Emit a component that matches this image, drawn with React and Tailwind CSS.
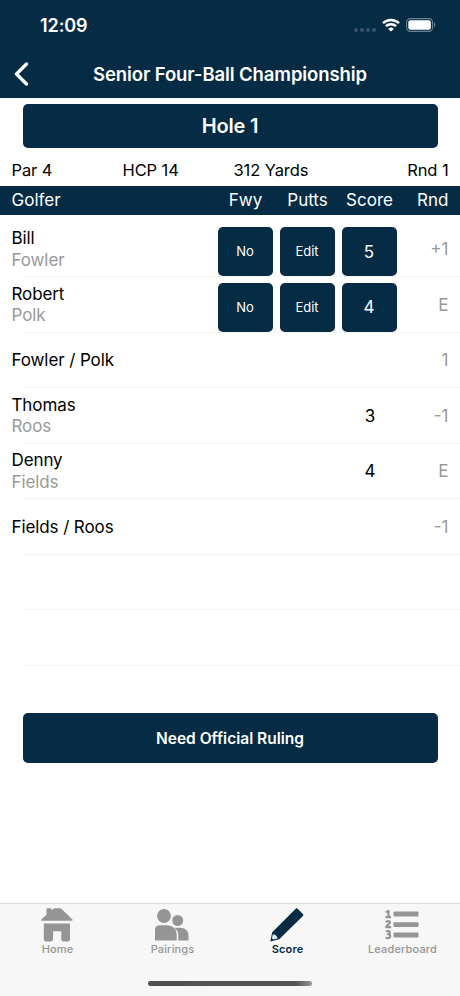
import React from 'react';

const infoItems = [
  { text: 'Par 4', className: 'w-[111px]' },
  { text: 'HCP 14', className: 'w-[111px]' },
  { text: '312 Yards', className: 'flex-1' },
  { text: 'Rnd 1', className: '' },
];

const rows = [
  { first: 'Bill', last: 'Fowler', fwy: 'No', putts: 'Edit', score: '5', rnd: '+1', editable: true },
  { first: 'Robert', last: 'Polk', fwy: 'No', putts: 'Edit', score: '4', rnd: 'E', editable: true },
  { first: 'Fowler / Polk', rnd: '1' },
  { first: 'Thomas', last: 'Roos', score: '3', rnd: '-1' },
  { first: 'Denny', last: 'Fields', score: '4', rnd: 'E' },
  { first: 'Fields / Roos', rnd: '-1' },
  {},
  {},
];

const HomeIcon = () => (
  <svg width="32" height="34" viewBox="0 0 32 34" fill="currentColor">
    <path d="M5.500 1c0-.4.300-.7.700-.7h3.600c.4 0 .7.300.7.7v1.500l1.500-1.500c.6-.5 1.300-.7 2.100-.7h4.400c.8 0 1.500.2 2.100.7l10.600 10.200c.7.700.5 1.500-.5 1.500H1c-1 0-1.200-.8-.5-1.500l5-4.500z" />
    <path d="M2.800 15.600H29v15.600c0 1.300-.9 2.200-2.200 2.200h-4.300c-1.300 0-2.200-.9-2.200-2.200v-8h-8.200v8c0 1.300-.9 2.200-2.200 2.200H5C3.700 33.400 2.800 32.500 2.800 31.200z" />
  </svg>
);

const PairingsIcon = () => (
  <svg width="34" height="32" viewBox="0 0 34 32" fill="currentColor">
    <circle cx="9" cy="7" r="6.900" />
    <circle cx="22.700" cy="11.500" r="5.500" />
    <path d="M0 20.500C0 17.500 2 16.300 5 16.300h6.500c6.500 0 10.200 4 10.200 9.700v5.500H0z" />
    <path d="M19 18.800h5.800c5.500 0 8.700 3 8.700 7.500v5.200H23.300V26c0-3-1.500-5.500-4.300-7.200z" />
  </svg>
);

const PencilIcon = () => (
  <svg width="34" height="34" viewBox="0 0 34 34">
    <path d="M25.700.8c.6-.6 1.300-.6 1.900 0l5.300 5.200c.6.600.6 1.300 0 1.900L9.200 31.200.3 33.500l1.900-9.200z" fill="#052b45" />
    <path d="M2.900 26.200c2.700.4 4.200 1.800 4.700 4.200l-4.300 1.200-1.400-1.300z" fill="#dfeaf2" />
  </svg>
);

const LeaderboardIcon = () => (
  <svg width="34" height="30" viewBox="0 0 34 30" fill="currentColor">
    <rect x="8.500" y="1.600" width="25" height="4.800" rx="1" />
    <rect x="8.500" y="12.200" width="25" height="4.800" rx="1" />
    <rect x="8.500" y="22.600" width="25" height="4.800" rx="1" />
    <g fill="none" stroke="currentColor" strokeWidth="2.200">
      <path d="M.8 2.400L3.500.7V7M.5 7.200h5.500" />
      <path d="M.9 12.200c1-1.700 4.300-1.500 4.100.4-.1 1.300-3.500 2.600-3.700 4.500h4.900" />
      <path d="M.9 21.700c1.500-1.200 4.200-.8 4 .8-.1 1.300-1.500 1.700-2.700 1.700 1.500 0 3 .4 3 2 0 2.200-3 2.500-4.500 1.200" />
    </g>
  </svg>
);

const tabs = [
  { label: 'Home', icon: <HomeIcon /> },
  { label: 'Pairings', icon: <PairingsIcon /> },
  { label: 'Score', icon: <PencilIcon />, active: true },
  { label: 'Leaderboard', icon: <LeaderboardIcon /> },
];

const StatusBar = () => (
  <div className="flex h-[50px] items-center pl-10 pr-6">
    <span className="flex-1 pt-px text-[18px] font-semibold leading-6 tracking-[-0.1px]">12:09</span>
    <div className="mt-[9px] flex gap-[2px]">
      {[0, 1, 2, 3].map((dot) => (
        <span key={dot} className="size-[4px] rounded-full bg-[#385469]" />
      ))}
    </div>
    <svg className="ml-[6px]" width="18" height="14" viewBox="0 0 18 14" fill="none" stroke="white" strokeWidth="2.500">
      <path d="M1 5.200a11.500 11.500 0 0 1 16 0" />
      <path d="M3.900 8.200a7.400 7.400 0 0 1 10.200 0" />
      <path d="M9 13.500L6.200 10.900a4 4 0 0 1 5.600 0z" fill="white" stroke="none" />
    </svg>
    <svg className="ml-[6px]" width="30" height="14" viewBox="0 0 30 14">
      <rect x="0.600" y="0.600" width="26" height="12.800" rx="3.800" fill="none" stroke="#6b8292" strokeWidth="1.100" />
      <rect x="2.300" y="2.300" width="22.600" height="9.400" rx="2.200" fill="white" />
      <path d="M28 4.800c1.700.6 1.700 3.800 0 4.400z" fill="#6b8292" />
    </svg>
  </div>
);

const CellButton = ({ children, large }) => (
  <button
    className={`h-[49px] w-[55px] rounded-[5px] bg-[#052b45] text-white ${
      large ? 'pt-px text-[17px]' : 'text-[13px]'
    }`}
  >
    {children}
  </button>
);

const GolferRow = ({ first, last, fwy, putts, score, rnd, editable }) => (
  <div className="relative flex h-[55.500px] items-center px-[11.500px]">
    <div className="absolute bottom-0 left-[23px] right-0 h-px bg-[#f4f4f4]" />
    <div className="w-[206px] pt-px text-[17px] leading-[21.500px] tracking-[-0.1px]">
      <div className="text-black">{first}</div>
      {last && <div className="text-[#999]">{last}</div>}
    </div>
    <div className="relative mt-[5px] flex w-[180px] gap-[7px]">
      {editable && (
        <>
          <CellButton>{fwy}</CellButton>
          <CellButton>{putts}</CellButton>
          <CellButton large>{score}</CellButton>
        </>
      )}
    </div>
    {!editable && score && (
      <div className="-ml-[55px] w-[55px] pt-px text-center text-[17px]">{score}</div>
    )}
    <div className="flex-1 pt-px text-right text-[17px] text-[#999]">{rnd}</div>
  </div>
);

const App = () => {
  return (
    <div className="flex h-[996px] w-[460px] flex-col overflow-hidden bg-white font-['Inter',sans-serif] text-black">
      {/* Header */}
      <header className="h-[98px] bg-[#052b45] text-white">
        <StatusBar />
        <div className="flex h-12 items-center">
          <svg className="ml-[14px]" width="15" height="24" viewBox="0 0 15 24" fill="none" stroke="white" strokeWidth="3.300" strokeLinecap="round" strokeLinejoin="round">
            <path d="M12.500 2L2.500 12l10 10" />
          </svg>
          <h1 className="flex-1 whitespace-nowrap pr-[29px] pt-px text-center text-[18.500px] font-semibold tracking-[-0.1px]">
            Senior Four-Ball Championship
          </h1>
        </div>
      </header>

      {/* Hole summary */}
      <section className="h-[88px] pt-[6px]">
        <button className="mx-[22.500px] block h-11 w-[415px] rounded-[5px] bg-[#052b45] text-[20px] font-semibold tracking-[-0.2px] text-white">
          Hole 1
        </button>
        <div className="flex h-[44px] items-center px-[11.500px] text-[16.500px] tracking-[-0.1px]">
          {infoItems.map((item) => (
            <span key={item.text} className={item.className}>{item.text}</span>
          ))}
        </div>
      </section>

      {/* Scorecard */}
      <section>
        <div className="flex h-[29px] items-center bg-[#052b45] px-[11.500px] pt-px text-[17px] text-white">
          <span className="w-[203px]">Golfer</span>
          <span className="w-[62px] text-center">Fwy</span>
          <span className="w-[62px] text-center">Putts</span>
          <span className="w-[62px] text-center">Score</span>
          <span className="flex-1 text-right">Rnd</span>
        </div>
        <div className="pt-[6.500px]">
          {rows.map((row, index) => (
            <GolferRow key={index} {...row} />
          ))}
        </div>
      </section>

      <button className="mx-[22.500px] mt-[47.500px] h-[50px] shrink-0 rounded-[5px] bg-[#052b45] pt-px text-[15.500px] font-semibold text-white">
        Need Official Ruling
      </button>

      {/* Tab bar */}
      <nav className="mt-auto h-[93px] shrink-0 border-t border-[#dadada] bg-[#f7f7f7]">
        <div className="flex">
          {tabs.map((tab) => (
            <div
              key={tab.label}
              className={`flex h-[54px] w-[115px] flex-col items-center ${
                tab.active ? 'font-semibold text-[#052b45]' : 'font-medium text-[#959595]'
              }`}
            >
              <div className="flex h-[38px] items-center pr-px pt-[3px]">{tab.icon}</div>
              <span className="text-[11px] leading-[14px] tracking-[0.15px]">{tab.label}</span>
            </div>
          ))}
        </div>
        <div className="mx-auto mt-[23px] h-[5px] w-[164px] rounded-full bg-gradient-to-r from-[#505050] via-[#555] via-90% to-[#999]" />
      </nav>
    </div>
  );
};

export default App;
